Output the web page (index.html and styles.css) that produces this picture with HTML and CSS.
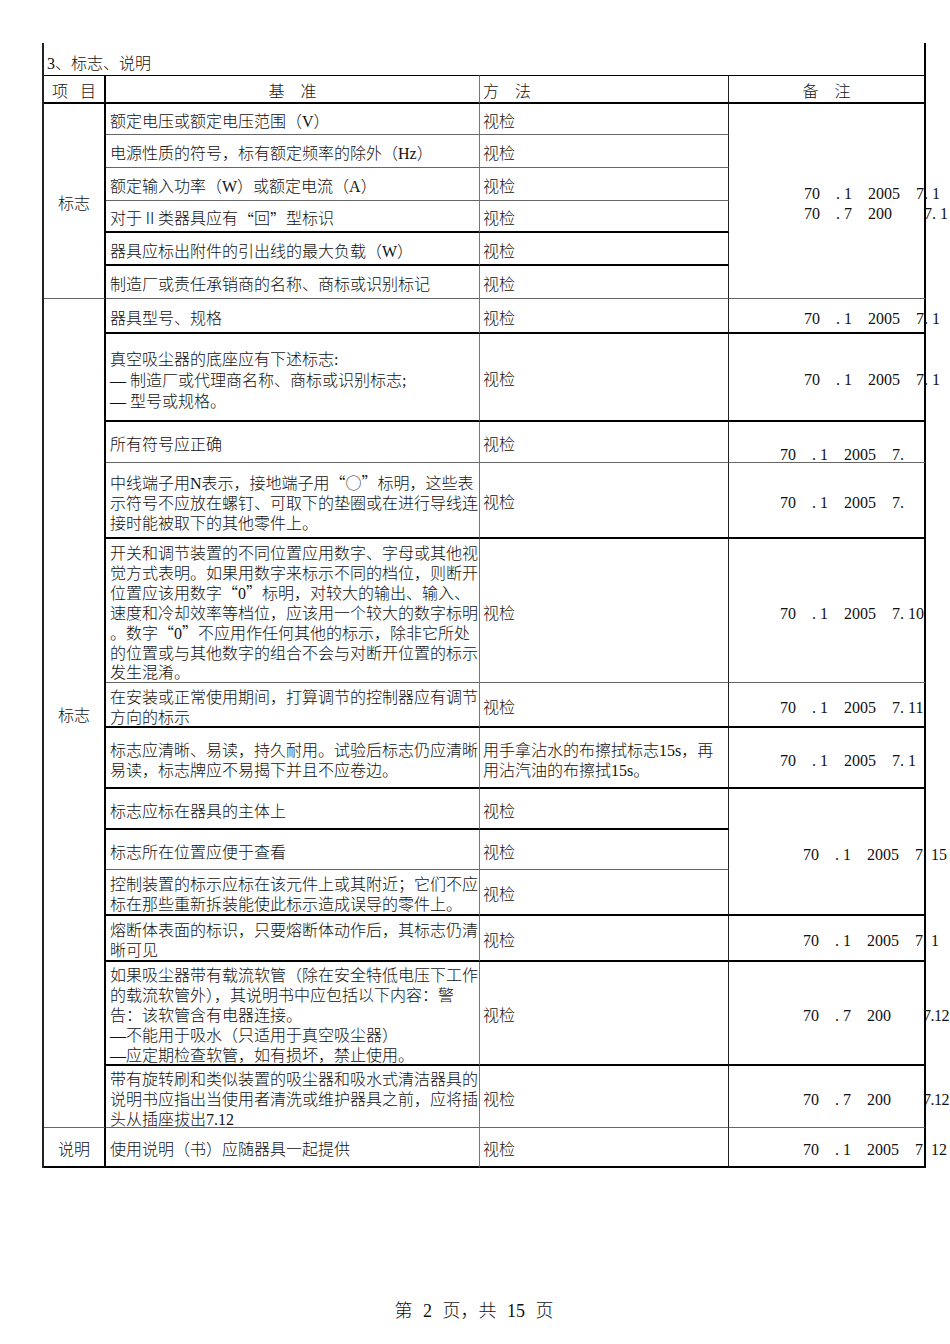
FILE: index.html
```
<!DOCTYPE html>
<html lang="zh-CN">
<head>
<meta charset="utf-8">
<title>标志、说明</title>
<link rel="stylesheet" href="styles.css">
</head>
<body>
<div class="sheet">
  <div class="cell title">3、标志、说明</div>

  <div class="cell c1 hd k center"><span class="sp">项 目</span></div>
  <div class="cell c2 hd k center">基　准</div>
  <div class="cell c3 hd k">方　法</div>
  <div class="cell c4 hd k center">备　注</div>

  <!-- r1 -->
  <div class="cell c1 g1 t center">标志</div>
  <div class="cell c2 t">额定电压或额定电压范围（V）</div>
  <div class="cell c3 t">视检</div>
  <div class="cell c4 g1 t p804">
    <div class="ref"><span class="w4">70</span><span class="w4"><span class="dot">.</span>1</span><span class="w6">2005</span><span>7<span class="dot">.</span>1</span></div>
    <div class="ref"><span class="w4">70</span><span class="w4"><span class="dot">.</span>7</span><span class="w7">200</span><span>7<span class="dot">.</span>1</span></div>
  </div>
  <!-- r2 -->
  <div class="cell c2 t">电源性质的符号，标有额定频率的除外（Hz）</div>
  <div class="cell c3 t">视检</div>
  <!-- r3 -->
  <div class="cell c2 t">额定输入功率（W）或额定电流（A）</div>
  <div class="cell c3 t">视检</div>
  <!-- r4 -->
  <div class="cell c2 k">对于Ⅱ类器具应有<span class="q">“</span>回<span class="q">”</span>型标识</div>
  <div class="cell c3 k">视检</div>
  <!-- r5 -->
  <div class="cell c2 k">器具应标出附件的引出线的最大负载（W）</div>
  <div class="cell c3 k">视检</div>
  <!-- r6 -->
  <div class="cell c2 t">制造厂或责任承销商的名称、商标或识别标记</div>
  <div class="cell c3 t">视检</div>

  <!-- r7 -->
  <div class="cell c1 g2 t center">标志</div>
  <div class="cell c2 k">器具型号、规格</div>
  <div class="cell c3 k">视检</div>
  <div class="cell c4 k p804">
    <div class="ref"><span class="w4">70</span><span class="w4"><span class="dot">.</span>1</span><span class="w6">2005</span><span>7<span class="dot">.</span>1</span></div>
  </div>
  <!-- r8 -->
  <div class="cell c2 k"><div class="loose">真空吸尘器的底座应有下述标志:<br>— 制造厂或代理商名称、商标或识别标志;<br>— 型号或规格。</div></div>
  <div class="cell c3 k">视检</div>
  <div class="cell c4 k p804">
    <div class="ref"><span class="w4">70</span><span class="w4"><span class="dot">.</span>1</span><span class="w6">2005</span><span>7<span class="dot">.</span>1</span></div>
  </div>
  <!-- r9 -->
  <div class="cell c2 t">所有符号应正确</div>
  <div class="cell c3 t">视检</div>
  <div class="cell c4 t p780 bot">
    <div class="ref"><span class="w4">70</span><span class="w4"><span class="dot">.</span>1</span><span class="w6">2005</span><span>7<span class="dot">.</span></span></div>
  </div>
  <!-- r10 -->
  <div class="cell c2 k"><div>中线端子用N表示，接地端子用<span class="q">“○”</span>标明，这些表<br>示符号不应放在螺钉、可取下的垫圈或在进行导线连<br>接时能被取下的其他零件上。</div></div>
  <div class="cell c3 k">视检</div>
  <div class="cell c4 k p780">
    <div class="ref"><span class="w4">70</span><span class="w4"><span class="dot">.</span>1</span><span class="w6">2005</span><span>7<span class="dot">.</span></span></div>
  </div>
  <!-- r11 -->
  <div class="cell c2 t"><div class="tight">开关和调节装置的不同位置应用数字、字母或其他视<br>觉方式表明。如果用数字来标示不同的档位，则断开<br>位置应该用数字<span class="q">“</span>0<span class="q">”</span>标明，对较大的输出、输入、<br>速度和冷却效率等档位，应该用一个较大的数字标明<br>。数字<span class="q">“</span>0<span class="q">”</span>不应用作任何其他的标示，除非它所处<br>的位置或与其他数字的组合不会与对断开位置的标示<br>发生混淆。</div></div>
  <div class="cell c3 t">视检</div>
  <div class="cell c4 t p780">
    <div class="ref"><span class="w4">70</span><span class="w4"><span class="dot">.</span>1</span><span class="w6">2005</span><span>7<span class="dot">.</span>10</span></div>
  </div>
  <!-- r12 -->
  <div class="cell c2 k"><div>在安装或正常使用期间，打算调节的控制器应有调节<br>方向的标示</div></div>
  <div class="cell c3 k">视检</div>
  <div class="cell c4 k p780">
    <div class="ref"><span class="w4">70</span><span class="w4"><span class="dot">.</span>1</span><span class="w6">2005</span><span>7<span class="dot">.</span>11</span></div>
  </div>
  <!-- r13 -->
  <div class="cell c2 k"><div>标志应清晰、易读，持久耐用。试验后标志仍应清晰<br>易读，标志牌应不易揭下并且不应卷边。</div></div>
  <div class="cell c3 k"><div>用手拿沾水的布擦拭标志15s，再<br>用沾汽油的布擦拭15s。</div></div>
  <div class="cell c4 k p780">
    <div class="ref"><span class="w4">70</span><span class="w4"><span class="dot">.</span>1</span><span class="w6">2005</span><span>7<span class="dot">.</span>1</span></div>
  </div>
  <!-- r14 -->
  <div class="cell c2 k">标志应标在器具的主体上</div>
  <div class="cell c3 k">视检</div>
  <div class="cell c4 g3 k p803">
    <div class="ref"><span class="w4">70</span><span class="w4"><span class="dot">.</span>1</span><span class="w6">2005</span><span>7<span class="dot">.</span>15</span></div>
  </div>
  <!-- r15 -->
  <div class="cell c2 t">标志所在位置应便于查看</div>
  <div class="cell c3 t">视检</div>
  <!-- r16 -->
  <div class="cell c2 k"><div>控制装置的标示应标在该元件上或其附近；它们不应<br>标在那些重新拆装能使此标示造成误导的零件上。</div></div>
  <div class="cell c3 k">视检</div>
  <!-- r17 -->
  <div class="cell c2 k"><div>熔断体表面的标识，只要熔断体动作后，其标志仍清<br>晰可见</div></div>
  <div class="cell c3 k">视检</div>
  <div class="cell c4 k p803">
    <div class="ref"><span class="w4">70</span><span class="w4"><span class="dot">.</span>1</span><span class="w6">2005</span><span>7<span class="dot">.</span>1</span></div>
  </div>
  <!-- r18 -->
  <div class="cell c2 k"><div>如果吸尘器带有载流软管（除在安全特低电压下工作<br>的载流软管外），其说明书中应包括以下内容：警<br>告：该软管含有电器连接。<br>—不能用于吸水（只适用于真空吸尘器）<br>—应定期检查软管，如有损坏，禁止使用。</div></div>
  <div class="cell c3 k">视检</div>
  <div class="cell c4 k p803">
    <div class="ref"><span class="w4">70</span><span class="w4"><span class="dot">.</span>7</span><span class="w7">200</span><span class="lt">7.12</span></div>
  </div>
  <!-- r19 -->
  <div class="cell c2 t"><div>带有旋转刷和类似装置的吸尘器和吸水式清洁器具的<br>说明书应指出当使用者清洗或维护器具之前，应将插<br>头从插座拔出7.12</div></div>
  <div class="cell c3 t">视检</div>
  <div class="cell c4 t p803">
    <div class="ref"><span class="w4">70</span><span class="w4"><span class="dot">.</span>7</span><span class="w7">200</span><span class="lt">7.12</span></div>
  </div>

  <!-- r20 -->
  <div class="cell c1 k center">说明</div>
  <div class="cell c2 k">使用说明（书）应随器具一起提供</div>
  <div class="cell c3 k">视检</div>
  <div class="cell c4 k p803">
    <div class="ref"><span class="w4">70</span><span class="w4"><span class="dot">.</span>1</span><span class="w6">2005</span><span>7<span class="dot">.</span>12</span></div>
  </div>
</div>

<div class="footer">第 2 页，共 15 页</div>
</body>
</html>
```

FILE: styles.css
```
html, body {
  margin: 0;
  padding: 0;
  background: #fff;
}

body {
  font-family: "Liberation Serif", "Noto Sans CJK SC", serif;
  font-size: 16px;
  font-weight: 300;
  color: #111;
  width: 950px;
}

.sheet {
  margin: 43px 0 0 42px;
  width: 884px;
  box-sizing: border-box;
  border-left: 2px solid #222;
  display: grid;
  grid-template-columns: 62px 374px 249px 197px;
  grid-template-rows:
    32px 29px
    31px 33px 33px 32px 33px 33px
    35px 88px 41px 76px 144px 45px 61px
    41px 40px 46px 46px 104px 62px 40px;
}

.cell {
  box-sizing: border-box;
  display: flex;
  align-items: center;
  white-space: nowrap;
  line-height: 20px;
  overflow: visible;
  min-width: 0;
  padding-top: 6px;
}

.title {
  grid-column: 1 / span 4;
  border-right: 2px solid #000;
  padding-left: 3px;
  padding-top: 10px;
}

.c1 { grid-column: 1; border-right: 2px solid #000; }
.c2 { grid-column: 2; border-right: 1px solid #777; padding-left: 4px; }
.c3 { grid-column: 3; border-right: 1px solid #222; padding-left: 3px; }
.c4 {
  grid-column: 4;
  border-right: 2px solid #000;
  flex-direction: column;
  align-items: flex-start;
  justify-content: center;
}

.hd { border-top: 1px solid #000; }

.center { justify-content: center; padding-left: 0; }
.c4.center { align-items: center; }

.g1 { grid-row: span 6; }
.g2 { grid-row: span 13; }
.g3 { grid-row: span 3; }

.k { border-bottom: 2px solid #000; }
.t { border-bottom: 1px solid #666; }

.sp { word-spacing: 8px; }

.tight { line-height: 19.5px; }
.loose { line-height: 21px; }

.q {
  font-family: "Noto Sans CJK SC", sans-serif;
}

.p804 { padding-left: 75px; }
.p803 { padding-left: 74px; }
.p780 { padding-left: 51px; }
.bot { justify-content: flex-end; }
.bot .ref { margin-bottom: -3px; }

.ref {
  display: flex;
  line-height: 20px;
  white-space: nowrap;
}

.w4 { display: inline-block; width: 32px; flex: none; }
.w6 { display: inline-block; width: 48px; flex: none; }
.w7 { display: inline-block; width: 56px; flex: none; }
.dot { display: inline-block; width: 8px; }
.lt { letter-spacing: -0.5px; }

.footer {
  margin-top: 131px;
  text-align: center;
  font-size: 18px;
  line-height: 24px;
  word-spacing: 6px;
  padding-right: 2px;
}
```
